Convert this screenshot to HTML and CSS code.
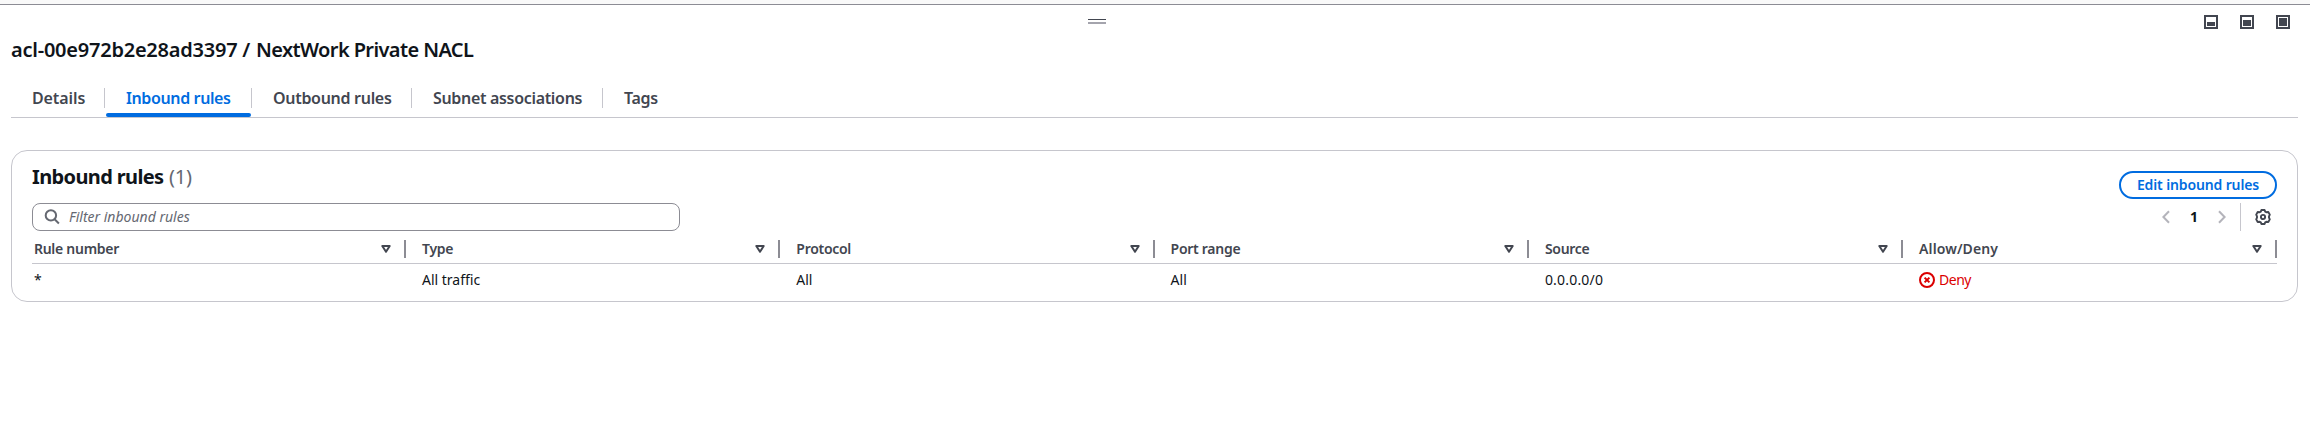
FILE: index.html
```html
<!DOCTYPE html>
<html lang="en">
<head>
<meta charset="utf-8">
<title>NextWork Private NACL</title>
<link rel="stylesheet" href="styles.css">
</head>
<body>
<div class="split-edge"></div>
<main class="panel">
  <div class="toolbar">
    <span class="handle"></span>
    <div class="sizes">
      <svg width="14" height="14" viewBox="0 0 14 14"><path class="frame" d="M1 1h12v12H1z"/><path class="fill" d="M3 7h8v4H3z"/></svg>
      <svg width="14" height="14" viewBox="0 0 14 14"><path class="frame" d="M1 1h12v12H1z"/><path class="fill" d="M3 5h8v6H3z"/></svg>
      <svg width="14" height="14" viewBox="0 0 14 14"><path class="frame" d="M1 1h12v12H1z"/><path class="fill" d="M3 3h8v8H3z"/></svg>
    </div>
  </div>
  <h1 class="title"><span class="acl-id">acl-00e972b2e28ad3397 /</span> <span class="acl-name">NextWork Private NACL</span></h1>
  <nav class="tabs">
    <a class="tab tab-details">Details</a>
    <a class="tab tab-inbound active">Inbound rules</a>
    <a class="tab tab-outbound">Outbound rules</a>
    <a class="tab tab-subnet">Subnet associations</a>
    <a class="tab tab-tags">Tags</a>
  </nav>
  <section class="card">
    <div class="card-head">
      <h2 class="heading">Inbound rules <span class="count">(1)</span></h2>
      <button class="edit">Edit inbound rules</button>
    </div>
    <div class="tools">
      <div class="search">
        <svg width="16" height="16" viewBox="0 0 16 16"><circle cx="6.9" cy="6.4" r="5.2"/><path d="M10.6 10.3l4.3 4.2"/></svg>
        <span class="placeholder">Filter inbound rules</span>
      </div>
      <div class="pager">
        <svg class="arrow" width="8" height="14" viewBox="0 0 8 14"><path d="M7 1.2L1.4 7 7 12.8"/></svg>
        <span class="page">1</span>
        <svg class="arrow" width="8" height="14" viewBox="0 0 8 14"><path d="M1 1.2L6.6 7 1 12.8"/></svg>
        <span class="divider"></span>
        <svg class="gear" width="16" height="16" viewBox="0 0 16 16"><path d="M6.400 1h3.200l.6 1.600 1.200.7 1.900-.3 1.500 2.600L14 7.300v1.400l.8 1.700-1.500 2.600-1.900-.3-1.200.7-.6 1.600H6.400l-.6-1.600-1.200-.7-1.900.3-1.500-2.600L2 8.700V7.300l-.8-1.700L2.700 3l1.900.3 1.200-.7z"/><circle cx="8" cy="8" r="2.100"/></svg>
      </div>
    </div>
    <div class="grid header">
      <div class="cell first">Rule number<svg class="sort" width="10" height="8" viewBox="0 0 10 8"><path d="M1.300 1h7.400L5 6.800z"/></svg></div>
      <div class="cell">Type<svg class="sort" width="10" height="8" viewBox="0 0 10 8"><path d="M1.300 1h7.400L5 6.800z"/></svg></div>
      <div class="cell">Protocol<svg class="sort" width="10" height="8" viewBox="0 0 10 8"><path d="M1.300 1h7.400L5 6.800z"/></svg></div>
      <div class="cell">Port range<svg class="sort" width="10" height="8" viewBox="0 0 10 8"><path d="M1.300 1h7.400L5 6.800z"/></svg></div>
      <div class="cell">Source<svg class="sort" width="10" height="8" viewBox="0 0 10 8"><path d="M1.300 1h7.400L5 6.800z"/></svg></div>
      <div class="cell"><span class="allow">Allow/Deny</span><svg class="sort" width="10" height="8" viewBox="0 0 10 8"><path d="M1.300 1h7.400L5 6.800z"/></svg></div>
    </div>
    <div class="grid row">
      <div class="cell first">*</div>
      <div class="cell">All traffic</div>
      <div class="cell">All</div>
      <div class="cell">All</div>
      <div class="cell ip">0.0.0.0/0</div>
      <div class="cell deny"><svg width="16" height="16" viewBox="0 0 16 16"><circle cx="8" cy="8" r="7"/><path d="M5.600 5.600l4.800 4.800M10.400 5.600l-4.800 4.800"/></svg><span>Deny</span></div>
    </div>
  </section>
</main>
</body>
</html>
```
FILE: styles.css
```css
* { box-sizing: border-box; }
body {
  margin: 0;
  background: #fff;
  color: #0f141a;
  font: 14px/20px "Noto Sans", "Open Sans", sans-serif;
}
svg { display: block; flex: none; fill: none; }
.split-edge { height: 5px; background: #f9f9f9; border-bottom: 1px solid #8c8c94; }
.panel { padding: 0 12px 0 11px; }

.toolbar { display: flex; justify-content: space-between; height: 33px; padding: 10px 8px 0 1077px; }
.handle { width: 18px; height: 5px; margin-top: 4px; border-top: 1px solid #424650; border-bottom: 2px solid #a4a4ad; }
.sizes { display: flex; gap: 22px; }
.frame { stroke: #424650; stroke-width: 2; }
.fill { fill: #424650; }

.title { margin: 0; font-size: 20px; line-height: 24px; font-weight: 600; letter-spacing: -.385px; }
.acl-id { letter-spacing: -.23px; }
.acl-name { margin-left: 1px; letter-spacing: -.6px; }
.tabs { display: flex; height: 56px; padding-top: 26px; border-bottom: 1px solid #c6c6cd; }
.tab {
  display: flex;
  align-items: flex-start;
  height: 20px;
  padding-left: 21px;
  border-right: 1px solid #c6c6cd;
  color: #424650;
  font-size: 16px;
  font-weight: 600;
  letter-spacing: -.32px;
  white-space: nowrap;
}
.tab-details { width: 94px; letter-spacing: -.1px; }
.tab-inbound { width: 147px; letter-spacing: -.38px; }
.tab-outbound { width: 160px; letter-spacing: -.3px; }
.tab-subnet { width: 191px; }
.tab-tags { border: 0; }
.active { position: relative; color: #006ce0; }
.active::after {
  content: "";
  position: absolute;
  left: 1px;
  right: 0;
  bottom: -9px;
  height: 4px;
  border-radius: 2px;
  background: #006ce0;
}

.card { height: 152px; margin-top: 32px; padding: 0 20px; border: 1px solid #c6c6cd; border-radius: 16px; }
.card-head { display: flex; justify-content: space-between; height: 52px; padding-top: 14px; }
.heading { margin: 0; font-size: 20px; line-height: 24px; font-weight: 700; letter-spacing: -.63px; }
.count { margin-left: 1px; color: #656871; font-weight: 400; letter-spacing: -.2px; }
.edit {
  width: 158px;
  height: 28px;
  margin: 6px 0 0;
  padding: 0;
  border: 2px solid #006ce0;
  border-radius: 14px;
  background: #fff;
  color: #006ce0;
  font: 600 14px/20px "Noto Sans", "Open Sans", sans-serif;
  letter-spacing: -.13px;
}

.tools { display: flex; justify-content: space-between; height: 28px; }
.search { display: flex; align-items: center; width: 648px; padding-left: 11px; gap: 9px; border: 1px solid #8c8c94; border-radius: 8px; }
.search svg { stroke: #656871; stroke-width: 2; }
.placeholder { color: #656871; font-style: italic; }
.pager { display: flex; align-items: center; padding-right: 6px; }
.arrow { stroke: #b4b4bb; stroke-width: 2; }
.page { width: 48px; text-align: center; font-weight: 700; }
.divider { width: 1px; height: 28px; margin: 0 14px; background: #c6c6cd; }
.gear { stroke: #424650; stroke-width: 1.9; stroke-linejoin: round; }

.grid { display: grid; grid-template-columns: 374px repeat(3, 374.3px) 374.2px 1fr; }
.header { height: 33px; padding-top: 9px; border-bottom: 1px solid #c6c6cd; color: #424650; font-weight: 600; letter-spacing: -.28px; }
.cell { padding-left: 16px; white-space: nowrap; }
.cell.first { padding-left: 2px; }
.header .cell { display: flex; align-items: center; justify-content: space-between; height: 18px; padding-right: 13px; border-right: 2px solid #8c8c94; }
.sort { stroke: #424650; stroke-width: 2; stroke-linejoin: round; }
.allow { letter-spacing: .1px; }
.row { height: 37px; padding-top: 6px; }
.ip { letter-spacing: .2px; }
.deny { display: flex; gap: 4px; color: #db0000; letter-spacing: -.5px; }
.deny svg { margin-top: 2px; stroke: currentColor; stroke-width: 2; }
```
